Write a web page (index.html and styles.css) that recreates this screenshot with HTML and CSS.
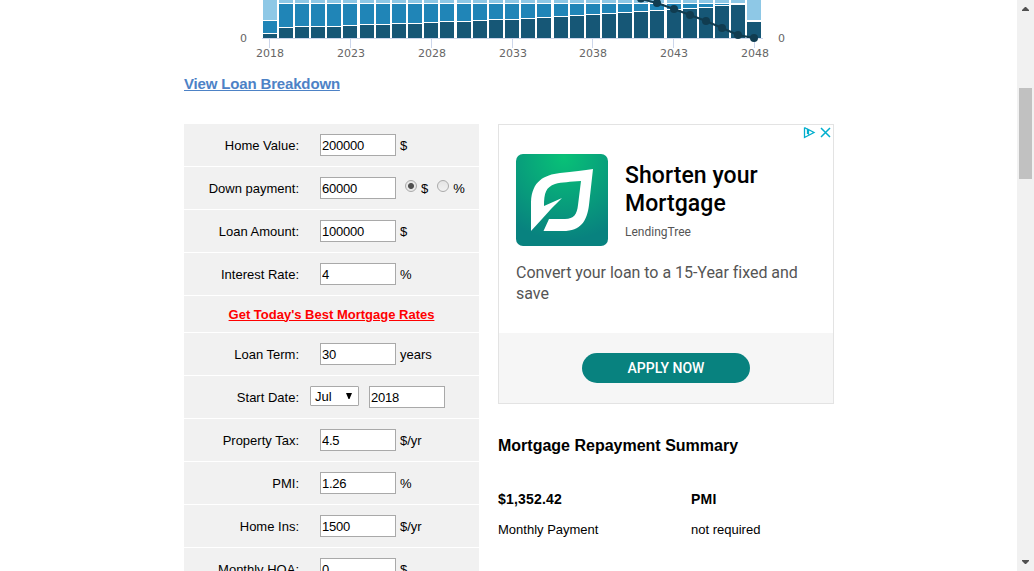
FILE: index.html
```html
<!DOCTYPE html>
<html lang="en">
<head>
<meta charset="utf-8">
<title>Mortgage Calculator</title>
<link rel="stylesheet" href="styles.css">
</head>
<body>
<div class="page">
  <main class="content">
    <svg class="chart" width="650" height="64" viewBox="184 0 650 64">
      <g id="bars" shape-rendering="crispEdges"></g>
      <path class="axis" shape-rendering="crispEdges" d="M262 38.5H763M269.500 39V48M350.500 39V48M431.500 39V48M512.500 39V48M592.500 39V48M673.500 39V48M754.500 39V48"/>
      <path class="balance" d="M625-5L641-1L657 3L674 9L690 15L706 21L722 28L738 35L754 38"/>
      <g class="dots"><circle cx="641" cy="-1.500" r="4"/><circle cx="657" cy="3" r="4"/><circle cx="674" cy="9" r="4"/><circle cx="690" cy="15" r="4"/><circle cx="706" cy="21" r="4"/><circle cx="722" cy="28" r="4"/><circle cx="738" cy="35" r="4"/><circle cx="754" cy="38" r="4"/></g>
      <g class="ticks"><text x="243.500" y="42">0</text><text x="781.500" y="42">0</text><text x="270" y="57">2018</text><text x="351" y="57">2023</text><text x="432" y="57">2028</text><text x="513" y="57">2033</text><text x="593" y="57">2038</text><text x="674" y="57">2043</text><text x="755" y="57">2048</text></g>
    </svg>
    <a class="breakdown">View Loan Breakdown</a>
    <div class="columns">
      <form class="form">
        <div class="row"><label>Home Value:</label><input value="200000"><span class="unit">$</span></div>
        <div class="row"><label>Down payment:</label><input value="60000"><i class="radio on"></i><span class="opt">$</span><i class="radio second"></i><span class="opt">%</span></div>
        <div class="row"><label>Loan Amount:</label><input value="100000"><span class="unit">$</span></div>
        <div class="row"><label>Interest Rate:</label><input value="4"><span class="unit">%</span></div>
        <div class="row promo"><a>Get Today's Best Mortgage Rates</a></div>
        <div class="row"><label>Loan Term:</label><input value="30"><span class="unit">years</span></div>
        <div class="row date"><label>Start Date:</label><span class="select">Jul<svg width="6" height="6" viewBox="0 0 6 6"><path d="M0 0H6L3.500 6H2.500Z"/></svg></span><input value="2018"></div>
        <div class="row"><label>Property Tax:</label><input value="4.5"><span class="unit">$/yr</span></div>
        <div class="row"><label>PMI:</label><input value="1.26"><span class="unit">%</span></div>
        <div class="row"><label>Home Ins:</label><input value="1500"><span class="unit">$/yr</span></div>
        <div class="row"><label>Monthly HOA:</label><input value="0"><span class="unit">$</span></div>
      </form>
      <div class="side">
        <section class="ad">
          <svg class="adchoices" width="29" height="13" viewBox="0 0 29 13"><path d="M1.500 1.500V11.500L11 6.500L4.500 3V8M4.500 3.200L1.500 1.500M5.500 4.500V8.500" fill="none" stroke="#00aecd" stroke-width="1.300"/><path d="M18 2L27 11M27 2L18 11" stroke="#00aecd" stroke-width="1.500"/></svg>
          <div class="ad-top">
            <svg class="logo" width="92" height="92" viewBox="0 0 92 92"><defs><radialGradient id="leaf" cx=".52" cy=".04" r=".9"><stop offset="0" stop-color="#08c177"/><stop offset="1" stop-color="#08827f"/></radialGradient></defs><rect width="92" height="92" rx="7" fill="url(#leaf)"/><path fill="#fff" d="M15 77V48C16 27 28 21 44 19Q64 17 77 15L73 51C71 67 65 77 47 77H27.500L33 65H49C58 65 61 60 62 51L65 27C54 28 46 28 39 30C30 33 28 39 28 52L46 44Q40 50 35 55Q27 64 15 77Z"/></svg>
            <div><h2>Shorten your<br>Mortgage</h2><p class="brand">LendingTree</p></div>
          </div>
          <p class="pitch">Convert your loan to a 15-Year fixed and<br>save</p>
          <div class="ad-foot"><a class="apply">APPLY NOW</a></div>
        </section>
        <section class="summary">
          <h3>Mortgage Repayment Summary</h3>
          <dl><div><dt>$1,352.42</dt><dd>Monthly Payment</dd></div><div><dt>PMI</dt><dd>not required</dd></div></dl>
        </section>
      </div>
    </div>
  </main>
  <aside class="scrollbar">
    <svg width="7" height="4" viewBox="0 0 7 4"><path d="M3 0H4L7 3V4H0V3Z"/></svg>
    <div class="thumb"></div>
    <svg class="down" width="7" height="4" viewBox="0 0 7 4"><path d="M0 0H7V1L4 4H3L0 1Z"/></svg>
  </aside>
</div>
<script src="chart.js"></script>
</body>
</html>
```
FILE: styles.css
```css
* { box-sizing: border-box; }
body { margin: 0; background: #fff; color: #000; font: 13px "Liberation Sans", Arial, sans-serif; overflow: hidden; }
h2, h3, p, dl, dd { margin: 0; }
.page { display: flex; justify-content: space-between; height: 571px; overflow: hidden; }
.content { width: 650px; margin-left: 184px; }
.chart { display: block; }
.light { fill: #8ec8e6; }
.mid { fill: #2085b7; }
.dark { fill: #165776; }
.axis { stroke: #ccd6eb; fill: none; }
.balance { stroke: #103c50; stroke-width: 2; fill: none; }
.dots { fill: #103c50; }
.ticks { font: 11px "DejaVu Sans", Verdana, sans-serif; fill: #666; text-anchor: middle; }
.breakdown { display: block; height: 60px; padding-top: 11px; font-size: 15px; line-height: 18px; font-weight: bold; color: #4d82c6; text-decoration: underline; letter-spacing: -.16px; }
.columns { display: flex; gap: 19px; }
.form { width: 295px; flex: none; display: flex; flex-direction: column; gap: 1px; }
.row { height: 42px; background: #f1f1f1; display: flex; align-items: center; flex: none; }
.row label { width: 115px; text-align: right; margin-right: 21px; }
.row input { width: 76px; height: 22px; border: 1px solid #a9a9a9; border-radius: 0; padding: 1px; margin: 0; font: 13px "Liberation Sans", Arial, sans-serif; letter-spacing: -.25px; background: #fff; color: #000; }
.unit { margin-left: 4px; }
.row.promo { height: 36px; justify-content: center; color: #f00; font-weight: bold; text-decoration: underline; }
.row.date label { margin-right: 11px; }
.row.date input { margin-left: 10px; }
.select { width: 49px; height: 20px; margin-bottom: 2px; padding: 0 6px 0 4px; display: flex; align-items: center; justify-content: space-between; border: 1px solid #a9a9a9; border-radius: 1px; background: #fff; }
.radio { width: 12px; height: 12px; border: 1px solid #aaa; border-radius: 50%; background: linear-gradient(#e4e4e4, #f1f1f1); margin: 0 4px 4px 9px; }
.radio.on { background: radial-gradient(circle, #505050 0 2.500px, #e8e8e8 3.500px); }
.radio.second { margin-left: 9px; }
.side { width: 336px; }
.ad { position: relative; height: 280px; border: 1px solid #e3e3e3; font-family: Roboto, sans-serif; display: flex; flex-direction: column; }
.adchoices { position: absolute; right: 1px; top: 1px; }
.ad-top { display: flex; gap: 17px; padding: 29px 0 0 17px; }
.ad h2 { font-size: 23px; line-height: 28px; font-weight: 500; padding-top: 8px; letter-spacing: .06px; }
.brand { color: #555; font-size: 12px; line-height: 16px; margin-top: 6px; }
.pitch { color: #555; font-size: 16px; line-height: 21px; padding: 16px 0 0 17px; letter-spacing: -.03px; }
.ad-foot { margin-top: auto; height: 70px; background: #f6f6f6; display: flex; justify-content: center; align-items: center; }
.apply { width: 168px; height: 30px; border-radius: 15px; background: #08827f; color: #fff; font-size: 14px; line-height: 31px; font-weight: 500; text-align: center; }
.summary { padding-top: 32px; }
.summary h3 { font-size: 16px; line-height: 19px; }
.summary dl { display: grid; grid-template-columns: 193px 1fr; margin-top: 36px; }
.summary dt { font-size: 14px; line-height: 17px; font-weight: bold; letter-spacing: .2px; }
.summary dd { margin-top: 14px; line-height: 15px; }
.scrollbar { width: 17px; background: #f1f1f1; display: flex; flex-direction: column; align-items: center; padding-top: 7px; }
.scrollbar svg { fill: #505050; flex: none; }
.thumb { width: 13px; height: 91px; background: #c1c1c1; margin-top: 77px; flex: none; }
.scrollbar .down { margin-top: auto; margin-bottom: 7px; }
```
FILE: chart.js
```js
// Bar tops in plot pixels, one per year from 2018 to 2048.
const xs = [263,279,295,311,327,343,360,376,392,408,424,440,457,473,489,505,521,537,554,570,586,602,618,634,650,667,683,699,715,731,747];
const principal = [34,28,27,27,27,26,25,25,24,24,23,22,22,21,20,20,19,18,17,16,15,14,13,12,11,10,9,8,6,5,22];
const bars = document.getElementById('bars');
function bar(x, top, bottom, kind) {
  if (bottom <= top) return;
  const r = document.createElementNS('http://www.w3.org/2000/svg', 'rect');
  r.setAttribute('x', x);
  r.setAttribute('y', top);
  r.setAttribute('width', 14);
  r.setAttribute('height', bottom - top);
  r.setAttribute('class', kind);
  bars.appendChild(r);
}
xs.forEach((x, i) => {
  const edge = i === 0 || i === xs.length - 1;
  bar(x, 0, edge ? 20 : 3, 'light');
  if (i < xs.length - 1) bar(x, edge ? 21 : 4, principal[i] - 1, 'mid');
  bar(x, principal[i], 38, 'dark');
});
```
